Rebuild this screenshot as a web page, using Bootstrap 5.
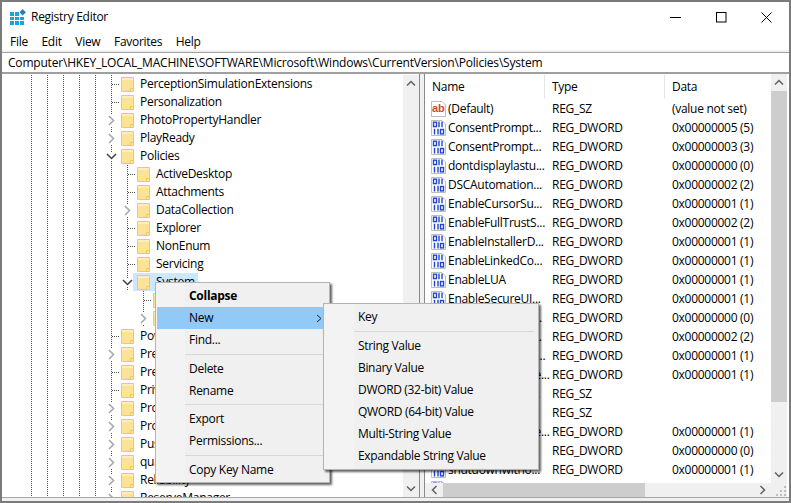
<!DOCTYPE html>
<html lang="en">
<head>
<meta charset="utf-8">
<title>Registry Editor</title>
<link href="https://cdn.jsdelivr.net/npm/bootstrap@5.3.0/dist/css/bootstrap.min.css" rel="stylesheet">
<style>
html,body{height:100%;margin:0;overflow:hidden;background:#fff}
body{font:12px/18px "Open Sans","Liberation Sans",sans-serif;color:#000;letter-spacing:-.28px}
.win{width:791px;height:503px;border:2px solid #7b7b7b;background:#fff;position:relative}
.titlebar{height:31px;flex:none}
.appicon{margin-left:8px;margin-top:-1px}
.apptitle{margin-left:5px;margin-top:-1px}
.winbtns{margin-left:auto;padding-right:17px;gap:34.5px}
.menubar{height:17px;flex:none;padding-left:8px;gap:13.6px;line-height:17px}
.band{height:2px;background:#f0f0f0;flex:none}
.addr{height:21px;flex:none;border:0;border-top:1px solid #a0a0a0;border-bottom:1px solid #a0a0a0;border-radius:0;padding:0 6px;font-size:12px;line-height:19px;color:#000;box-shadow:none;white-space:nowrap;letter-spacing:-.197px}
.panes{flex:1 1 0;min-height:0;border-top:1px solid #a0a0a0}
.treepane{width:418px;flex:none;border-right:1px solid #8a8a8a;padding-top:1px;min-height:0}
.tree{flex:1 1 0;min-width:0;
 --d:repeating-linear-gradient(#555 0 1px,transparent 1px 2px);
 background-image:var(--d),var(--d),var(--d),var(--d),var(--d),var(--d);
 background-size:1px 100%;background-repeat:no-repeat;
 background-position:29px 0,45px 0,61px 0,77px 0,93px 0,109px 0}
.tr{height:18px;display:flex;align-items:center;white-space:nowrap}
.lv0{padding-left:101px}.lv1{padding-left:117px}.lv2{padding-left:133px}
.tw{width:16px;height:18px;flex:none;display:flex;align-items:center;justify-content:center;position:relative}
.tw svg{background:#fff}
.leaf::after{content:"";position:absolute;left:9px;top:9px;width:7px;height:1px;background:repeating-linear-gradient(90deg,#555 0 1px,transparent 1px 2px)}
.lv1 .tw,.lv2 .tw{background:repeating-linear-gradient(#555 0 1px,transparent 1px 2px) 8px 0/1px 100% no-repeat}
.fold{width:13px;height:15px;flex:none;margin-left:2px}
.lbl{margin-left:6px}
.sel{display:flex;align-items:center;background:#cce8ff;height:18px;margin-left:-2px;padding-left:2px;width:65px}
.vbar{width:16px;flex:none;background:#f0f0f0}
.arw{height:17px;flex:none}
.grow{flex:1 1 0;min-height:0}
.thumb{background:#cdcdcd}
.sb-thumb{height:311px;flex:none}
.split{width:4px;flex:none;background:#f0f0f0}
.listpane{flex:1 1 0;min-width:0;border-left:1px solid #8a8a8a;margin-right:2px}
.listcol{flex:1 1 0;min-width:0}
.listbody{flex:1 1 0;min-height:0}
.hdr{height:25px;flex:none;padding-top:1px}
.hc{width:120px;flex:none;padding-left:7px;height:24px;line-height:24px;border-right:1px solid #e5e5e5}
.hc:last-child{border-right:0}
.lr{height:19px;display:flex;align-items:center;white-space:nowrap;flex:none}
.lrn{width:120px;flex:none;display:flex;align-items:center;padding-left:6px}
.lrn svg{flex:none;margin-right:2px}
.lrt{width:120px;flex:none;padding-left:7px}
.lrd{padding-left:7px}
.hbar{height:14px;flex:none;background:#f0f0f0}
.hbar .harw{width:18px;flex:none;display:flex;align-items:center;justify-content:center}
.hth{width:202px;flex:none;background:#cdcdcd}
.corner{width:16px;flex:none;background:#f0f0f0;display:flex;align-items:flex-end;justify-content:flex-end}
.base{height:4px;flex:none;background:#f0f0f0;border-top:1px solid #a8a8a8}
.ctx{display:block;margin:0;min-width:0;border:1px solid #b4b4b4;border-radius:0;background:linear-gradient(90deg,#f3f3f3 0 29px,#f0f0f0 29px);box-shadow:2px 2px 2px rgba(0,0,0,.6);font-size:12px;color:#000;letter-spacing:-.28px;z-index:5;position:absolute}
.ctxa{left:153px;top:280px;width:175px;height:201px;padding:2px 1px}
.ctxb{left:321px;top:301px;width:216px;height:167px;padding:2px;background:linear-gradient(90deg,#f3f3f3 0 30px,#f0f0f0 30px);z-index:6;letter-spacing:-.33px}
.ctxa .dropdown-item{height:22px;line-height:22px;padding:0 0 0 32px;color:#000;position:relative;font-size:12px;white-space:nowrap}
.ctxb .dropdown-item{height:22px;line-height:22px;padding:0 0 0 32px;color:#000;font-size:12px;white-space:nowrap}
.ctx .dropdown-item:hover{background:transparent}
.ctx .dropdown-item.hot{background:#91c9f7;color:#000}
.ctx .dropdown-item.fw{font-weight:700}
.ctx .dropdown-divider{margin:2.83px 2px 2.83px 28px;padding:0;border:0;height:1px;background:#d7d7d7;opacity:1}
.subarw{position:absolute;right:6px;top:7px}
</style>
</head>
<body>
<svg width="0" height="0" class="position-absolute">
 <defs>
  <symbol id="folder" viewBox="0 0 13 15">
   <path d="M.5.5H12.5V14.5H.5Z" fill="#fde39a" stroke="#f0c95f"/>
   <path d="M1 1H12V3H1Z" fill="#feeebd"/>
   <path d="M9.5 14.5V11.5H12.5" fill="none" stroke="#f0c95f"/>
  </symbol>
  <symbol id="sz" viewBox="0 0 15 16">
   <path d="M.5.5H11L14.5 4V15.5H.5Z" fill="#fff" stroke="#bdbdbd"/>
   <text x="1" y="11" font-family="'Liberation Sans',sans-serif" font-size="11" font-weight="700" fill="#d5482a" letter-spacing="0">ab</text>
  </symbol>
  <symbol id="dw" viewBox="0 0 15 16">
   <path d="M.5.5H11L14.5 4V15.5H.5Z" fill="#fff" stroke="#bdbdbd"/>
   <g fill="none" stroke="#1f45d0" stroke-width="1.4">
    <rect x="2.5" y="2.2" width="3" height="4.4"/><path d="M8 1.5V7.3M11 1.5V7.3"/>
    <path d="M3.5 8.8V14.5M7 8.8V14.5"/><rect x="9.5" y="9.5" width="3" height="4.4"/>
   </g>
  </symbol>
 </defs>
</svg>
<div class="win d-flex flex-column overflow-hidden">
 <div class="titlebar d-flex align-items-center">
  <svg class="appicon" width="16" height="16" viewBox="0 0 16 16"><g fill="#12a5e8"><rect x="0" y="3" width="4" height="4"/><rect x="5" y="3" width="4" height="4"/><rect x="0" y="8" width="4" height="3"/><rect x="5" y="8" width="4" height="3"/><rect x="10" y="8" width="4" height="3"/><rect x="0" y="12" width="4" height="4"/><rect x="5" y="12" width="4" height="4"/><rect x="10" y="12" width="4" height="4"/></g><path d="M12.5 0 16 3.2 12.5 6.4 9.5 3.2Z" fill="#2b7fb8"/></svg>
  <span class="apptitle">Registry Editor</span>
  <div class="winbtns d-flex align-items-center">
   <svg width="11" height="11" viewBox="0 0 11 11"><path d="M0 5.5H11" stroke="#000"/></svg>
   <svg width="11" height="11" viewBox="0 0 11 11"><rect x=".5" y=".5" width="9.5" height="9.5" fill="none" stroke="#000"/></svg>
   <svg width="11" height="11" viewBox="0 0 11 11"><path d="M.5.5 10.5 10.5M10.5.5 .5 10.5" stroke="#000"/></svg>
  </div>
 </div>
 <div class="menubar d-flex"><span>File</span><span>Edit</span><span>View</span><span>Favorites</span><span>Help</span></div>
 <div class="band"></div>
 <div class="addr form-control">Computer\HKEY_LOCAL_MACHINE\SOFTWARE\Microsoft\Windows\CurrentVersion\Policies\System</div>
 <div class="panes d-flex">
  <div class="treepane d-flex">
   <div class="tree overflow-hidden">
    <div class="tr lv0"><span class="tw leaf"></span><svg class="fold"><use href="#folder"/></svg><span class="lbl">PerceptionSimulationExtensions</span></div>
    <div class="tr lv0"><span class="tw leaf"></span><svg class="fold"><use href="#folder"/></svg><span class="lbl">Personalization</span></div>
    <div class="tr lv0"><span class="tw"><svg width="8" height="11" viewBox="0 0 8 11"><path d="M2 1 6.5 5.5 2 10" fill="none" stroke="#a6a6a6" stroke-width="1.5"/></svg></span><svg class="fold"><use href="#folder"/></svg><span class="lbl">PhotoPropertyHandler</span></div>
    <div class="tr lv0"><span class="tw"><svg width="8" height="11" viewBox="0 0 8 11"><path d="M2 1 6.5 5.5 2 10" fill="none" stroke="#a6a6a6" stroke-width="1.5"/></svg></span><svg class="fold"><use href="#folder"/></svg><span class="lbl">PlayReady</span></div>
    <div class="tr lv0"><span class="tw"><svg width="11" height="7" viewBox="0 0 11 7"><path d="M1 1 5.5 5.5 10 1" fill="none" stroke="#404040" stroke-width="1.5"/></svg></span><svg class="fold"><use href="#folder"/></svg><span class="lbl">Policies</span></div>
    <div class="tr lv1"><span class="tw leaf"></span><svg class="fold"><use href="#folder"/></svg><span class="lbl">ActiveDesktop</span></div>
    <div class="tr lv1"><span class="tw leaf"></span><svg class="fold"><use href="#folder"/></svg><span class="lbl">Attachments</span></div>
    <div class="tr lv1"><span class="tw"><svg width="8" height="11" viewBox="0 0 8 11"><path d="M2 1 6.5 5.5 2 10" fill="none" stroke="#a6a6a6" stroke-width="1.5"/></svg></span><svg class="fold"><use href="#folder"/></svg><span class="lbl">DataCollection</span></div>
    <div class="tr lv1"><span class="tw leaf"></span><svg class="fold"><use href="#folder"/></svg><span class="lbl">Explorer</span></div>
    <div class="tr lv1"><span class="tw leaf"></span><svg class="fold"><use href="#folder"/></svg><span class="lbl">NonEnum</span></div>
    <div class="tr lv1"><span class="tw leaf"></span><svg class="fold"><use href="#folder"/></svg><span class="lbl">Servicing</span></div>
    <div class="tr lv1"><span class="tw"><svg width="11" height="7" viewBox="0 0 11 7"><path d="M1 1 5.5 5.5 10 1" fill="none" stroke="#404040" stroke-width="1.5"/></svg></span><span class="sel"><svg class="fold"><use href="#folder"/></svg><span class="lbl">System</span></span></div>
    <div class="tr lv2"><span class="tw leaf"></span><svg class="fold"><use href="#folder"/></svg><span class="lbl">Audit</span></div>
    <div class="tr lv2"><span class="tw"><svg width="8" height="11" viewBox="0 0 8 11"><path d="M2 1 6.5 5.5 2 10" fill="none" stroke="#a6a6a6" stroke-width="1.5"/></svg></span><svg class="fold"><use href="#folder"/></svg><span class="lbl">UIPI</span></div>
    <div class="tr lv0"><span class="tw leaf"></span><svg class="fold"><use href="#folder"/></svg><span class="lbl">PowerEfficiency</span></div>
    <div class="tr lv0"><span class="tw"><svg width="8" height="11" viewBox="0 0 8 11"><path d="M2 1 6.5 5.5 2 10" fill="none" stroke="#a6a6a6" stroke-width="1.5"/></svg></span><svg class="fold"><use href="#folder"/></svg><span class="lbl">PrecisionTouchPad</span></div>
    <div class="tr lv0"><span class="tw leaf"></span><svg class="fold"><use href="#folder"/></svg><span class="lbl">PreviewHandlers</span></div>
    <div class="tr lv0"><span class="tw leaf"></span><svg class="fold"><use href="#folder"/></svg><span class="lbl">Privacy</span></div>
    <div class="tr lv0"><span class="tw"><svg width="8" height="11" viewBox="0 0 8 11"><path d="M2 1 6.5 5.5 2 10" fill="none" stroke="#a6a6a6" stroke-width="1.5"/></svg></span><svg class="fold"><use href="#folder"/></svg><span class="lbl">PropertySystem</span></div>
    <div class="tr lv0"><span class="tw"><svg width="8" height="11" viewBox="0 0 8 11"><path d="M2 1 6.5 5.5 2 10" fill="none" stroke="#a6a6a6" stroke-width="1.5"/></svg></span><svg class="fold"><use href="#folder"/></svg><span class="lbl">Proximity</span></div>
    <div class="tr lv0"><span class="tw"><svg width="8" height="11" viewBox="0 0 8 11"><path d="M2 1 6.5 5.5 2 10" fill="none" stroke="#a6a6a6" stroke-width="1.5"/></svg></span><svg class="fold"><use href="#folder"/></svg><span class="lbl">PushNotifications</span></div>
    <div class="tr lv0"><span class="tw"><svg width="8" height="11" viewBox="0 0 8 11"><path d="M2 1 6.5 5.5 2 10" fill="none" stroke="#a6a6a6" stroke-width="1.5"/></svg></span><svg class="fold"><use href="#folder"/></svg><span class="lbl">qua</span></div>
    <div class="tr lv0"><span class="tw"><svg width="8" height="11" viewBox="0 0 8 11"><path d="M2 1 6.5 5.5 2 10" fill="none" stroke="#a6a6a6" stroke-width="1.5"/></svg></span><svg class="fold"><use href="#folder"/></svg><span class="lbl">Reliability</span></div>
    <div class="tr lv0"><span class="tw"><svg width="8" height="11" viewBox="0 0 8 11"><path d="M2 1 6.5 5.5 2 10" fill="none" stroke="#a6a6a6" stroke-width="1.5"/></svg></span><svg class="fold"><use href="#folder"/></svg><span class="lbl">ReserveManager</span></div>
   </div>
   <div class="vbar d-flex flex-column">
    <div class="arw d-flex align-items-center justify-content-center"><svg width="10" height="7" viewBox="0 0 10 7"><path d="M1 5.5 5 1.5 9 5.5" fill="none" stroke="#606060" stroke-width="1.5"/></svg></div>
    <div class="grow"></div>
    <div class="arw d-flex align-items-center justify-content-center"><svg width="10" height="7" viewBox="0 0 10 7"><path d="M1 1.5 5 5.5 9 1.5" fill="none" stroke="#606060" stroke-width="1.5"/></svg></div>
   </div>
  </div>
  <div class="split"></div>
  <div class="listpane d-flex flex-column">
   <div class="listbody d-flex">
    <div class="listcol d-flex flex-column overflow-hidden">
     <div class="hdr d-flex"><div class="hc">Name</div><div class="hc">Type</div><div class="hc">Data</div></div>
     <div class="lr"><span class="lrn"><svg width="15" height="16"><use href="#sz"/></svg>(Default)</span><span class="lrt">REG_SZ</span><span class="lrd">(value not set)</span></div>
     <div class="lr"><span class="lrn"><svg width="15" height="16"><use href="#dw"/></svg>ConsentPrompt...</span><span class="lrt">REG_DWORD</span><span class="lrd">0x00000005 (5)</span></div>
     <div class="lr"><span class="lrn"><svg width="15" height="16"><use href="#dw"/></svg>ConsentPrompt...</span><span class="lrt">REG_DWORD</span><span class="lrd">0x00000003 (3)</span></div>
     <div class="lr"><span class="lrn"><svg width="15" height="16"><use href="#dw"/></svg>dontdisplaylastu...</span><span class="lrt">REG_DWORD</span><span class="lrd">0x00000000 (0)</span></div>
     <div class="lr"><span class="lrn"><svg width="15" height="16"><use href="#dw"/></svg>DSCAutomation...</span><span class="lrt">REG_DWORD</span><span class="lrd">0x00000002 (2)</span></div>
     <div class="lr"><span class="lrn"><svg width="15" height="16"><use href="#dw"/></svg>EnableCursorSu...</span><span class="lrt">REG_DWORD</span><span class="lrd">0x00000001 (1)</span></div>
     <div class="lr"><span class="lrn"><svg width="15" height="16"><use href="#dw"/></svg>EnableFullTrustS...</span><span class="lrt">REG_DWORD</span><span class="lrd">0x00000002 (2)</span></div>
     <div class="lr"><span class="lrn"><svg width="15" height="16"><use href="#dw"/></svg>EnableInstallerD...</span><span class="lrt">REG_DWORD</span><span class="lrd">0x00000001 (1)</span></div>
     <div class="lr"><span class="lrn"><svg width="15" height="16"><use href="#dw"/></svg>EnableLinkedCo...</span><span class="lrt">REG_DWORD</span><span class="lrd">0x00000001 (1)</span></div>
     <div class="lr"><span class="lrn"><svg width="15" height="16"><use href="#dw"/></svg>EnableLUA</span><span class="lrt">REG_DWORD</span><span class="lrd">0x00000001 (1)</span></div>
     <div class="lr"><span class="lrn"><svg width="15" height="16"><use href="#dw"/></svg>EnableSecureUI...</span><span class="lrt">REG_DWORD</span><span class="lrd">0x00000001 (1)</span></div>
     <div class="lr"><span class="lrn"><svg width="15" height="16"><use href="#dw"/></svg>EnableUIADeskt...</span><span class="lrt">REG_DWORD</span><span class="lrd">0x00000000 (0)</span></div>
     <div class="lr"><span class="lrn"><svg width="15" height="16"><use href="#dw"/></svg>EnableVirtualiza...</span><span class="lrt">REG_DWORD</span><span class="lrd">0x00000002 (2)</span></div>
     <div class="lr"><span class="lrn"><svg width="15" height="16"><use href="#dw"/></svg>FilterAdministrat...</span><span class="lrt">REG_DWORD</span><span class="lrd">0x00000001 (1)</span></div>
     <div class="lr"><span class="lrn"><svg width="15" height="16"><use href="#dw"/></svg>PromptOnSecure...</span><span class="lrt">REG_DWORD</span><span class="lrd">0x00000001 (1)</span></div>
     <div class="lr"><span class="lrn"><svg width="15" height="16"><use href="#sz"/></svg>legalnoticecapti...</span><span class="lrt">REG_SZ</span><span class="lrd"></span></div>
     <div class="lr"><span class="lrn"><svg width="15" height="16"><use href="#sz"/></svg>legalnoticetext</span><span class="lrt">REG_SZ</span><span class="lrd"></span></div>
     <div class="lr"><span class="lrn"><svg width="15" height="16"><use href="#dw"/></svg>PromptOnSecure...</span><span class="lrt">REG_DWORD</span><span class="lrd">0x00000001 (1)</span></div>
     <div class="lr"><span class="lrn"><svg width="15" height="16"><use href="#dw"/></svg>scforceoption</span><span class="lrt">REG_DWORD</span><span class="lrd">0x00000000 (0)</span></div>
     <div class="lr"><span class="lrn"><svg width="15" height="16"><use href="#dw"/></svg>shutdownwitho...</span><span class="lrt">REG_DWORD</span><span class="lrd">0x00000001 (1)</span></div>
     <div class="lr"><span class="lrn"><svg width="15" height="16"><use href="#dw"/></svg></span></div>
    </div>
    <div class="vbar d-flex flex-column">
     <div class="arw d-flex align-items-center justify-content-center"><svg width="10" height="7" viewBox="0 0 10 7"><path d="M1 5.5 5 1.5 9 5.5" fill="none" stroke="#606060" stroke-width="1.5"/></svg></div>
     <div class="thumb sb-thumb"></div>
     <div class="grow"></div>
     <div class="arw d-flex align-items-center justify-content-center"><svg width="10" height="7" viewBox="0 0 10 7"><path d="M1 1.5 5 5.5 9 1.5" fill="none" stroke="#606060" stroke-width="1.5"/></svg></div>
    </div>
   </div>
   <div class="hbar d-flex">
    <div class="harw"><svg width="7" height="10" viewBox="0 0 7 10"><path d="M5.5 1 1.5 5 5.5 9" fill="none" stroke="#606060" stroke-width="1.5"/></svg></div>
    <div class="hth"></div>
    <div class="grow"></div>
    <div class="harw"><svg width="7" height="10" viewBox="0 0 7 10"><path d="M1.5 1 5.5 5 1.5 9" fill="none" stroke="#606060" stroke-width="1.5"/></svg></div>
    <div class="corner"><svg width="12" height="12" viewBox="0 0 12 12"><g fill="#bdbdbd"><rect x="9" y="1" width="2" height="2"/><rect x="5" y="5" width="2" height="2"/><rect x="9" y="5" width="2" height="2"/><rect x="1" y="9" width="2" height="2"/><rect x="5" y="9" width="2" height="2"/><rect x="9" y="9" width="2" height="2"/></g></svg></div>
   </div>
  </div>
 </div>
 <div class="base"></div>
 <div class="dropdown-menu show ctx ctxa">
  <a class="dropdown-item fw" href="#">Collapse</a>
  <a class="dropdown-item hot" href="#">New<svg class="subarw" width="6" height="9" viewBox="0 0 6 9"><path d="M1 1 5 4.5 1 8" fill="none" stroke="#222"/></svg></a>
  <a class="dropdown-item" href="#">Find...</a>
  <hr class="dropdown-divider">
  <a class="dropdown-item" href="#">Delete</a>
  <a class="dropdown-item" href="#">Rename</a>
  <hr class="dropdown-divider">
  <a class="dropdown-item" href="#">Export</a>
  <a class="dropdown-item" href="#">Permissions...</a>
  <hr class="dropdown-divider">
  <a class="dropdown-item" href="#">Copy Key Name</a>
 </div>
 <div class="dropdown-menu show ctx ctxb">
  <a class="dropdown-item" href="#">Key</a>
  <hr class="dropdown-divider">
  <a class="dropdown-item" href="#">String Value</a>
  <a class="dropdown-item" href="#">Binary Value</a>
  <a class="dropdown-item" href="#">DWORD (32-bit) Value</a>
  <a class="dropdown-item" href="#">QWORD (64-bit) Value</a>
  <a class="dropdown-item" href="#">Multi-String Value</a>
  <a class="dropdown-item" href="#">Expandable String Value</a>
 </div>
</div>
<script src="https://cdn.jsdelivr.net/npm/bootstrap@5.3.0/dist/js/bootstrap.bundle.min.js"></script>
</body>
</html>
